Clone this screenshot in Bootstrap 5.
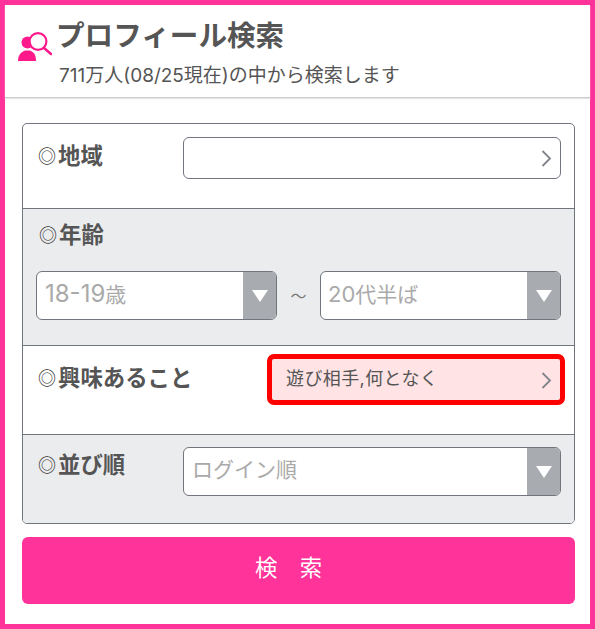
<!DOCTYPE html>
<html lang="ja"><head><meta charset="utf-8">
<link rel="stylesheet" href="https://cdn.jsdelivr.net/npm/bootstrap@5.3.0/dist/css/bootstrap.min.css">
<style>
html,body{height:100%}
body{font-family:Inter,"Noto Sans CJK JP",sans-serif;color:#555;background:#fff}
.frame{width:595px;height:629px;border:5px solid #ff3399}
.head{height:93px;border-bottom:1px solid #ccc;box-shadow:0 1px 1px #e5e5e5;padding:8px 0 0 13px}
.head-icon{width:34px;height:34px;margin-top:19px}
.ttl{font-size:28.6px;font-weight:700;line-height:43px;color:#555;margin-left:4px;margin-top:1px}
.sub{font-size:19px;line-height:24px;margin:7px 0 0 7px;color:#555}
.wrap{padding:25px 15px 0 17px}
.panel{border:1px solid #71757d;border-radius:5px;overflow:hidden;height:401px}
.rw{border-bottom:1px solid #71757d}
.rw:last-child{border-bottom:0}
.alt{background:#ebecee}
.lb{font-size:22.4px;font-weight:700;color:#555;line-height:30px}
.mk{display:inline-block;width:20px;font-size:18px;font-weight:400;vertical-align:1px;color:#333;margin-left:-1px}
.r1{height:85px;padding:17px 13px 0 16px}
.r2{height:137px;padding:11px 13px 0 13px}
.r2row{margin-top:20px}
.r3{height:89px;padding:17px 9px 0 16px}
.r4{height:88px;padding:15px 13px 0 16px}
.lbw{width:144px}
.sel{height:49px;width:241px;border:1px solid #71757d;border-radius:6px;background:#fff;font-size:21px;color:#aaa;line-height:44px;padding-left:8px;overflow:hidden}
.num{font-size:24px}
.num2{font-size:22px;margin-left:-1px}
.wd{width:378px;margin-top:-3px}
.sel-arrow{width:33px;height:100%;background:#a8abb0}
.til{width:43px;color:#777;font-size:16px}
.linkbox{height:42px;border:1px solid #71757d;border-radius:6px;background:#fff;width:378px;margin-top:-4px}
.hl{width:298px;height:51px;margin-top:-9px;border:5px solid #f00;border-radius:7px;background:#ffe3e5;padding-left:14px;font-size:18px;color:#555;line-height:40px;letter-spacing:.4px}
.chev{margin-top:13px}
.go{height:67px;background:#ff3399;color:#fff;font-size:22.4px;border:0;border-radius:6px;width:553px;margin-top:13px;padding:0 20px 6px 0}
.go:hover{background:#ff3399;color:#fff}
</style></head><body>
<div class="frame">
 <div class="head d-flex">
  <svg class="head-icon flex-shrink-0" viewBox="0 0 34 34"><circle cx="9.500" cy="10.500" r="6" fill="#ff1a8c"/><path d="M0 29c0-6 3-9 7-10.500h5c4 1.500 6 4.500 6 10.500z" fill="#ff1a8c"/><circle cx="20" cy="9.500" r="8.400" fill="#fff" stroke="#ff1a8c" stroke-width="2.200"/><path d="M26 16l7 6" stroke="#ff1a8c" stroke-width="2.600" stroke-linecap="round"/></svg>
  <div><div class="ttl">プロフィール検索</div><p class="sub">711万人(08/25現在)の中から検索します</p></div>
 </div>
 <div class="wrap">
  <div class="panel">
   <div class="rw r1 d-flex"><div class="lb lbw"><span class="mk">◎</span>地域</div><div class="linkbox d-flex justify-content-end align-items-center pe-2"><svg width="11" height="17" viewBox="0 0 11 17"><path d="M1.500 1l7.500 7.500-7.500 7.500" fill="none" stroke="#80838a" stroke-width="1.800"/></svg></div></div>
   <div class="rw r2 alt"><div class="lb ms-1"><span class="mk">◎</span>年齢</div>
    <div class="d-flex align-items-center r2row"><div class="sel d-flex justify-content-between"><span><span class="num">18-19</span>歳</span><span class="sel-arrow d-flex align-items-center justify-content-center"><svg width="16" height="12" viewBox="0 0 16 12"><path d="M0 0h16L8 12z" fill="#fff"/></svg></span></div><div class="til text-center">～</div><div class="sel d-flex justify-content-between"><span><span class="num2">20</span>代半ば</span><span class="sel-arrow d-flex align-items-center justify-content-center"><svg width="16" height="12" viewBox="0 0 16 12"><path d="M0 0h16L8 12z" fill="#fff"/></svg></span></div></div></div>
   <div class="rw r3 d-flex justify-content-between"><div class="lb"><span class="mk">◎</span>興味あること</div><div class="hl d-flex justify-content-between align-items-start pe-2">遊び相手,何となく<svg class="chev" width="11" height="17" viewBox="0 0 11 17"><path d="M1.500 1l7.500 7.500-7.500 7.500" fill="none" stroke="#80838a" stroke-width="1.800"/></svg></div></div>
   <div class="rw r4 alt d-flex"><div class="lb lbw"><span class="mk">◎</span>並び順</div><div class="sel wd d-flex justify-content-between">ログイン順<span class="sel-arrow d-flex align-items-center justify-content-center"><svg width="16" height="12" viewBox="0 0 16 12"><path d="M0 0h16L8 12z" fill="#fff"/></svg></span></div></div>
  </div>
  <button class="btn go">検　索</button>
 </div>
</div>
<script src="https://cdn.jsdelivr.net/npm/bootstrap@5.3.0/dist/js/bootstrap.bundle.min.js"></script>
</body></html>
